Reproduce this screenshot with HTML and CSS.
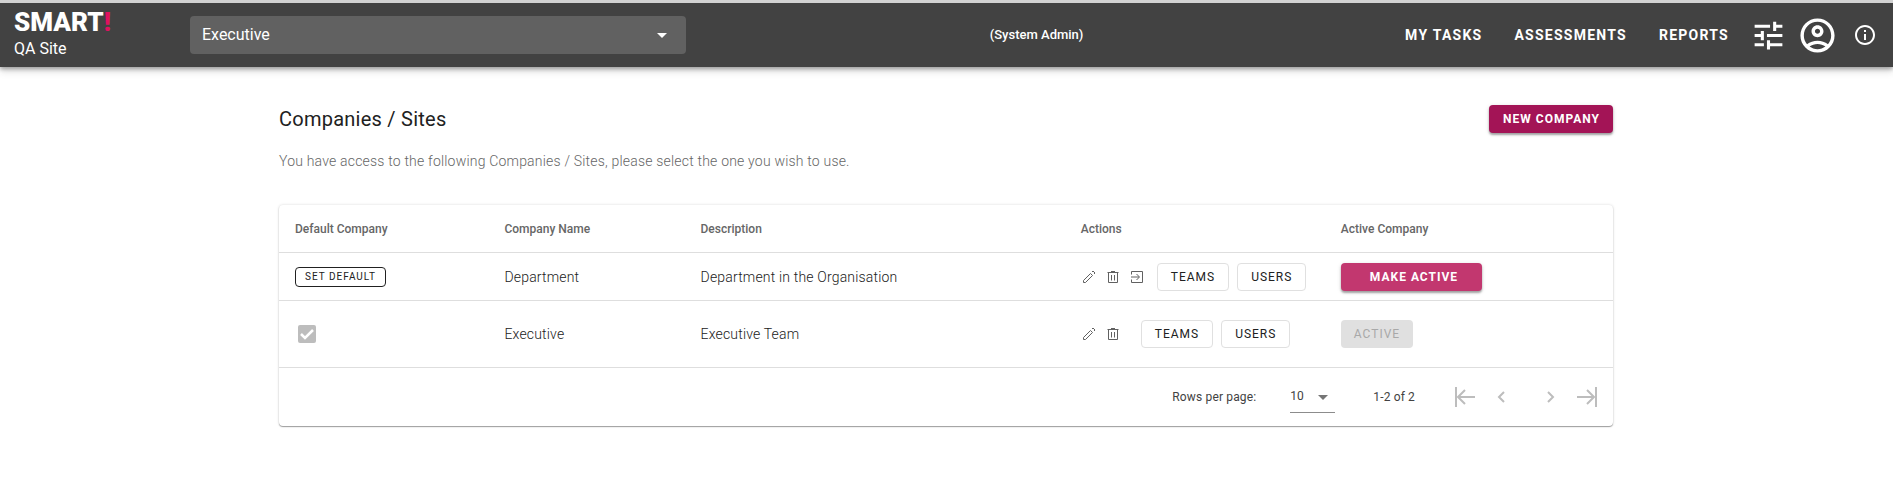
FILE: index.html
```html
<!DOCTYPE html>
<html lang="en">
<head>
<meta charset="utf-8">
<meta name="viewport" content="width=device-width, initial-scale=1">
<title>Companies / Sites</title>
<link rel="stylesheet" href="styles.css">
</head>
<body>
<svg class="sprite" aria-hidden="true">
  <symbol id="i-pencil" viewBox="0 0 16 16"><path d="M2.500 13.500v-2L9.500 4.500l2 2-7 7zM11 3l1-1 2 2-1 1" fill="none" stroke="currentColor"/></symbol>
  <symbol id="i-trash" viewBox="0 0 16 16"><path d="M2.500 3.500h11M6 2.500h4M3.500 3.500v10h9v-10M6.500 6v5.500M9.500 6v5.500" fill="none" stroke="currentColor"/></symbol>
  <symbol id="i-enter" viewBox="0 0 16 16"><path d="M2.500 5.500v-3h11v11h-11v-3M2 8h8M7.500 5L10.500 8l-3 3" fill="none" stroke="currentColor"/></symbol>
  <symbol id="i-caret" viewBox="0 0 24 24"><path d="M7 10l5 5 5-5z" fill="currentColor"/></symbol>
</svg>

<header class="topbar">
  <div class="brand">
    <span class="logo">SMART<span class="logo-mark">!</span></span>
    <span class="site">QA Site</span>
  </div>
  <div class="picker picker-company">
    <select aria-label="Company"><option>Executive</option><option>Department</option></select>
    <svg class="caret"><use href="#i-caret"/></svg>
  </div>
  <span class="role">(System Admin)</span>
  <nav class="nav">
    <a href="#">MY TASKS</a>
    <a href="#">ASSESSMENTS</a>
    <a href="#">REPORTS</a>
  </nav>
  <div class="tools">
    <button class="icon-btn" aria-label="Settings"><svg width="37" height="37" viewBox="0 0 24 24" fill="currentColor"><path d="M3 17v2h6v-2H3zM3 5v2h10V5H3zm10 16v-2h8v-2h-8v-2h-2v6h2zM7 9v2H3v2h4v2h2V9H7zm14 4v-2H11v2h10zm-6-4h2V7h4V5h-4V3h-2v6z"/></svg></button>
    <button class="icon-btn" aria-label="Account"><svg width="41" height="41" viewBox="0 0 24 24" fill="currentColor"><path d="M12 2C6.480 2 2 6.480 2 12s4.480 10 10 10 10-4.480 10-10S17.520 2 12 2zM7.350 18.500C8.660 17.560 10.260 17 12 17s3.340.560 4.650 1.500c-1.310.940-2.910 1.500-4.650 1.500s-3.340-.560-4.650-1.500zm10.790-1.380C16.450 15.800 14.320 15 12 15s-4.450.800-6.140 2.120C4.700 15.730 4 13.950 4 12c0-4.420 3.580-8 8-8s8 3.580 8 8c0 1.950-.700 3.730-1.860 5.120zM12 6c-1.930 0-3.500 1.570-3.500 3.500S10.070 13 12 13s3.500-1.570 3.500-3.500S13.930 6 12 6zm0 5c-.830 0-1.500-.670-1.500-1.500S11.170 8 12 8s1.500.670 1.500 1.500S12.830 11 12 11z"/></svg></button>
    <button class="icon-btn" aria-label="Information"><svg width="24" height="24" viewBox="0 0 24 24" fill="currentColor"><path d="M11 7h2v2h-2zm0 4h2v6h-2zm1-9C6.480 2 2 6.480 2 12s4.480 10 10 10 10-4.480 10-10S17.520 2 12 2zm0 18c-4.410 0-8-3.590-8-8s3.590-8 8-8 8 3.590 8 8-3.590 8-8 8z"/></svg></button>
  </div>
</header>

<main class="page">
  <div class="page-head">
    <h1>Companies / Sites</h1>
    <button class="btn btn-primary">NEW COMPANY</button>
  </div>
  <p class="intro">You have access to the following Companies / Sites, please select the one you wish to use.</p>

  <section class="card">
    <table class="grid">
      <colgroup><col class="c-default"><col class="c-name"><col class="c-desc"><col class="c-actions"><col class="c-active"></colgroup>
      <thead>
        <tr><th>Default Company</th><th>Company Name</th><th>Description</th><th>Actions</th><th>Active Company</th></tr>
      </thead>
      <tbody>
        <tr>
          <td><button class="btn btn-small">SET DEFAULT</button></td>
          <td>Department</td>
          <td>Department in the Organisation</td>
          <td>
            <div class="actions">
              <button class="icon-btn" aria-label="Edit"><svg class="row-icon"><use href="#i-pencil"/></svg></button>
              <button class="icon-btn" aria-label="Delete"><svg class="row-icon"><use href="#i-trash"/></svg></button>
              <button class="icon-btn" aria-label="Enter"><svg class="row-icon"><use href="#i-enter"/></svg></button>
              <span class="links"><button class="btn btn-outline">TEAMS</button><button class="btn btn-outline">USERS</button></span>
            </div>
          </td>
          <td><button class="btn btn-accent">MAKE ACTIVE</button></td>
        </tr>
        <tr class="tall">
          <td><label class="check"><input type="checkbox" checked disabled aria-label="Default company"><svg viewBox="0 0 18 18"><path d="M3 9l4 4 8-8" fill="none" stroke="currentColor" stroke-width="2.500"/></svg></label></td>
          <td>Executive</td>
          <td>Executive Team</td>
          <td>
            <div class="actions">
              <button class="icon-btn" aria-label="Edit"><svg class="row-icon"><use href="#i-pencil"/></svg></button>
              <button class="icon-btn" aria-label="Delete"><svg class="row-icon"><use href="#i-trash"/></svg></button>
              <span class="links links-wide"><button class="btn btn-outline">TEAMS</button><button class="btn btn-outline">USERS</button></span>
            </div>
          </td>
          <td><button class="btn btn-off" disabled>ACTIVE</button></td>
        </tr>
      </tbody>
    </table>
    <footer class="pager">
      <label for="rows">Rows per page:</label>
      <div class="picker picker-rows">
        <select id="rows"><option>10</option><option>25</option></select>
        <svg class="caret"><use href="#i-caret"/></svg>
      </div>
      <span class="range">1-2 of 2</span>
      <div class="pages">
        <button class="icon-btn" aria-label="First page" disabled><svg width="24" height="24" viewBox="0 0 24 24" fill="none" stroke="currentColor" stroke-width="2"><path d="M3 2v20M5 12h17M12 5l-7 7 7 7"/></svg></button>
        <button class="icon-btn" aria-label="Previous page" disabled><svg width="24" height="24" viewBox="0 0 24 24" fill="none" stroke="currentColor" stroke-width="2"><path d="M15 7l-5 5 5 5"/></svg></button>
        <button class="icon-btn next" aria-label="Next page" disabled><svg width="24" height="24" viewBox="0 0 24 24" fill="none" stroke="currentColor" stroke-width="2"><path d="M9 7l5 5-5 5"/></svg></button>
        <button class="icon-btn" aria-label="Last page" disabled><svg width="24" height="24" viewBox="0 0 24 24" fill="none" stroke="currentColor" stroke-width="2"><path d="M21 2v20M2 12h17M12 5l7 7-7 7"/></svg></button>
      </div>
    </footer>
  </section>
</main>
</body>
</html>
```
FILE: styles.css
```css
* { box-sizing: border-box; }

body {
  margin: 0;
  background: #fff;
  color: #212121;
  font-family: Roboto, "Liberation Sans", sans-serif;
  font-size: 14px;
  line-height: 20px;
}

button, select { font: inherit; color: inherit; }
svg { display: block; }

.sprite { position: absolute; width: 0; height: 0; }

.icon-btn {
  display: block;
  padding: 0;
  border: 0;
  background: none;
}

/* Top bar */
.topbar {
  display: flex;
  align-items: center;
  height: 67px;
  padding: 0 16px 0 14px;
  border-top: 3px solid #d2d2d2;
  background: #424242;
  color: #fff;
  box-shadow: 0 2px 4px rgba(0, 0, 0, .3), 0 4px 8px rgba(0, 0, 0, .15);
}

.brand {
  display: flex;
  flex-direction: column;
  flex: 0 0 176px;
  padding-top: 2px;
}

.logo {
  font-size: 26px;
  font-weight: 900;
  line-height: 26px;
}

.logo-mark { color: #e0115f; }

.site { font-size: 16px; line-height: 28px; }

.picker { display: grid; align-items: center; }

.picker select {
  grid-area: 1 / 1;
  width: 100%;
  border: 0;
  outline: 0;
  appearance: none;
  background: none;
}

.picker .caret {
  grid-area: 1 / 1;
  justify-self: end;
  width: 24px;
  height: 24px;
  pointer-events: none;
}

.picker-company { flex: 0 1 496px; }

.picker-company select {
  height: 38px;
  padding: 0 12px;
  border-radius: 4px;
  background: #616161;
  font-size: 16px;
}

.picker-company .caret { margin-right: 12px; }

.role {
  flex: 1;
  padding-right: 18px;
  text-align: center;
  font-size: 13px;
  font-weight: 500;
}

.nav { display: flex; gap: 32px; }

.nav a {
  color: inherit;
  font-weight: 700;
  letter-spacing: .0893em;
  text-decoration: none;
}

.tools {
  display: flex;
  align-items: center;
  gap: 10px;
  margin-left: 21px;
}

.tools .icon-btn:last-child { margin-left: 5px; }

/* Page */
.page {
  max-width: 1367px;
  margin: 0 auto;
  padding: 38px 17px 38px 16px;
}

.page-head {
  display: flex;
  align-items: center;
  justify-content: space-between;
}

h1 {
  margin: 0;
  font-size: 20px;
  font-weight: 400;
  letter-spacing: .0125em;
  line-height: 28px;
}

.intro {
  margin: 18px 0 34px;
  color: #666;
  font-weight: 300;
  letter-spacing: .0140em;
}

.btn {
  height: 28px;
  padding: 0 13px;
  border: 1px solid transparent;
  border-radius: 4px;
  background: none;
  font-size: 12px;
  font-weight: 400;
  letter-spacing: 1px;
  line-height: 16px;
  white-space: nowrap;
}

.btn-primary, .btn-accent {
  color: #fff;
  font-weight: 700;
  box-shadow: 0 2px 2px rgba(0, 0, 0, .3), 0 1px 4px rgba(0, 0, 0, .15);
}

.btn-primary { padding: 0 12px 0 13px; background: #a31456; }
.btn-accent { padding: 0 23px 0 28px; background: #c2376f; }
.btn-outline { border-color: #e0e0e0; }
.btn-off { padding: 0 12px; background: #e0e0e0; color: #a8a8a8; }

.btn-small {
  height: 20px;
  padding: 0 9px;
  border-color: #212121;
  font-size: 10px;
}

/* Table card */
.card {
  border-radius: 4px;
  background: #fff;
  box-shadow: 0 1px 1px rgba(0, 0, 0, .35), 0 0 3px rgba(0, 0, 0, .15);
}

.grid {
  width: 100%;
  border-collapse: collapse;
  table-layout: fixed;
}

.c-default { width: 15.700%; }
.c-name { width: 14.700%; }
.c-desc { width: 28.500%; }
.c-actions { width: 19.500%; }

.grid th, .grid td {
  height: 48px;
  padding: 0 0 0 16px;
  border-bottom: 1px solid #dedede;
  text-align: left;
  vertical-align: middle;
}

.grid td {
  font-weight: 300;
  letter-spacing: .0125em;
}

.grid tbody td { padding-top: 1px; }

.grid th {
  height: 47px;
  padding-top: 1px;
  color: #666;
  font-size: 12px;
  font-weight: 500;
}

.grid .tall td { height: 67px; }
.grid td .btn { display: block; }

.actions { display: flex; align-items: center; gap: 8px; }
.row-icon { width: 16px; height: 16px; color: #616161; }
.links { display: flex; gap: 8px; margin-left: 4px; }
.links-wide { margin-left: 12px; }

.check { display: grid; width: 18px; height: 18px; margin-left: 3px; }
.check input, .check svg { grid-area: 1 / 1; width: 18px; height: 18px; margin: 0; }
.check input { appearance: none; border-radius: 2px; background: #bdbdbd; }
.check svg { z-index: 1; color: #fff; }

/* Pager */
.pager {
  display: flex;
  align-items: center;
  justify-content: flex-end;
  height: 58px;
  padding-right: 14px;
  color: #424242;
  font-size: 12px;
  letter-spacing: .0125em;
}

.picker-rows { width: 45px; margin: 0 38px 0 34px; }

.picker-rows select {
  height: 32px;
  padding: 0;
  border-bottom: 1px solid #8c8c8c;
}

.picker-rows .caret { color: #757575; }

.pages {
  display: flex;
  align-items: center;
  gap: 12px;
  margin-left: 38px;
  color: #bdbdbd;
}

.pages .next { margin-left: 14px; }
```
